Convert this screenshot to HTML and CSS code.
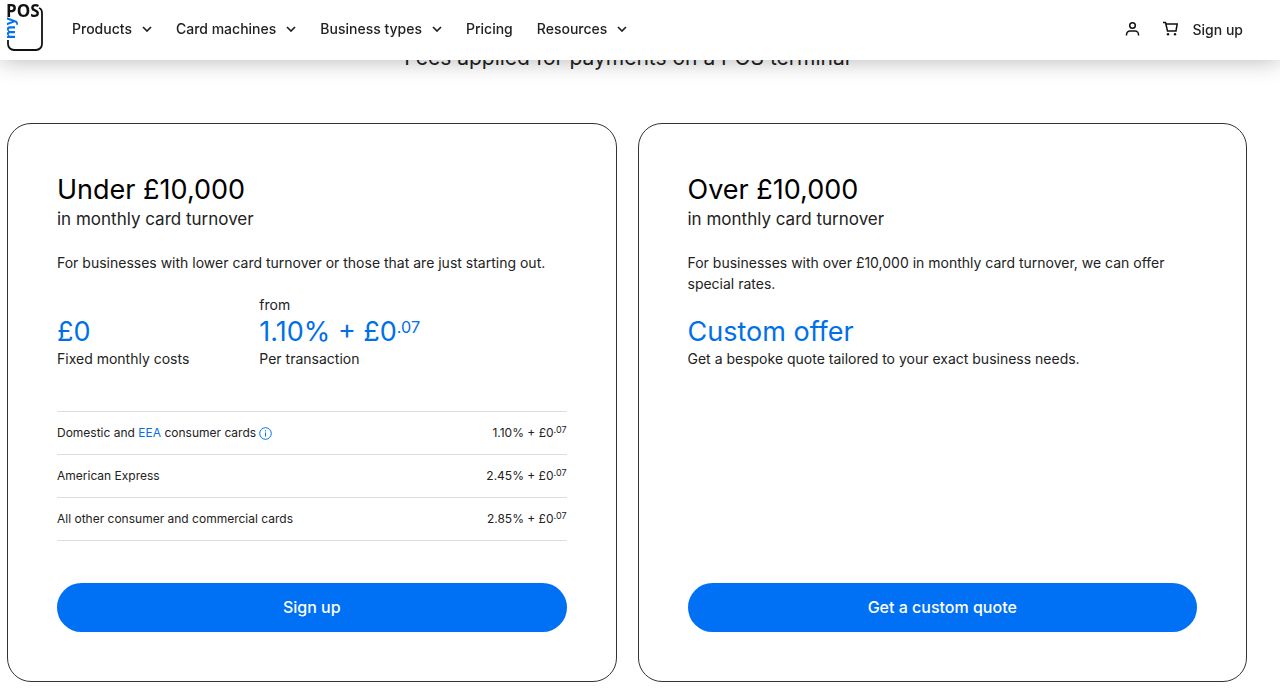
FILE: index.html
```html
<!DOCTYPE html>
<html lang="en">
<head>
<meta charset="utf-8">
<meta name="viewport" content="width=device-width, initial-scale=1">
<title>myPOS pricing</title>
<link rel="stylesheet" href="styles.css">
</head>
<body>
<header class="header">
  <a class="logo" href="#" aria-label="myPOS">
    <svg width="44" height="56" viewBox="0 0 44 56">
      <path d="M8 40v4a6 6 0 0 0 6 6h22a6 6 0 0 0 6-6V13q0-4-3-5" fill="none" stroke="#111" stroke-width="1.800"/>
      <text class="logo-pos" x="6" y="17">POS</text>
      <text class="logo-my" transform="translate(15 39) rotate(-90)">my</text>
    </svg>
  </a>
  <nav class="nav">
    <button class="nav-item" type="button">Products <svg class="chevron" viewBox="0 0 10 6"><path d="M1 1l4 4 4-4"/></svg></button>
    <button class="nav-item" type="button">Card machines <svg class="chevron" viewBox="0 0 10 6"><path d="M1 1l4 4 4-4"/></svg></button>
    <button class="nav-item" type="button">Business types <svg class="chevron" viewBox="0 0 10 6"><path d="M1 1l4 4 4-4"/></svg></button>
    <a class="nav-item" href="#">Pricing</a>
    <button class="nav-item" type="button">Resources <svg class="chevron" viewBox="0 0 10 6"><path d="M1 1l4 4 4-4"/></svg></button>
  </nav>
  <div class="actions">
    <a class="action" href="#" aria-label="Account"><svg class="icon" width="16" height="16" viewBox="0 0 16 16"><circle cx="7.500" cy="4.500" r="2.800"/><path d="M1.500 14.500v-1a3.500 3.500 0 0 1 3.500-3.500h5a3.500 3.500 0 0 1 3.500 3.500v1"/></svg></a>
    <a class="action" href="#" aria-label="Basket"><svg class="icon" width="16" height="16" viewBox="0 0 16 16"><path d="M0 1.500h2.500l2 8.500h8.500l1.200-7H3"/><circle class="wheel" cx="5" cy="13.300" r="1.200"/><circle class="wheel" cx="12" cy="13.300" r="1.200"/></svg></a>
    <a class="sign-up" href="#">Sign up</a>
  </div>
</header>
<main class="main">
  <p class="intro">Fees applied for payments on a POS terminal</p>
  <div class="plans">
    <section class="card">
      <h2 class="title">Under £10,000</h2>
      <p class="subtitle">in monthly card turnover</p>
      <p class="description">For businesses with lower card turnover or those that are just starting out.</p>
      <div class="prices">
        <div class="fixed">
          <p class="price">£0</p>
          <p>Fixed monthly costs</p>
        </div>
        <div>
          <p>from</p>
          <p class="price">1.10% + £0<sup>.07</sup></p>
          <p>Per transaction</p>
        </div>
      </div>
      <table class="rates">
        <tr><th scope="row">Domestic and <a href="#">EEA</a> consumer cards <svg class="info" width="13" height="13" viewBox="0 0 13 13"><circle cx="6.500" cy="6.500" r="5.800"/><path d="M6.500 5.500v4M6.500 3.200v1.200"/></svg></th><td>1.10% + £0<sup>.07</sup></td></tr>
        <tr><th scope="row">American Express</th><td>2.45% + £0<sup>.07</sup></td></tr>
        <tr><th scope="row">All other consumer and commercial cards</th><td>2.85% + £0<sup>.07</sup></td></tr>
      </table>
      <button class="cta" type="button">Sign up</button>
    </section>
    <section class="card">
      <h2 class="title">Over £10,000</h2>
      <p class="subtitle">in monthly card turnover</p>
      <p class="description">For businesses with over £10,000 in monthly card turnover, we can offer special rates.</p>
      <div class="offer">
        <p class="price">Custom offer</p>
        <p>Get a bespoke quote tailored to your exact business needs.</p>
      </div>
      <button class="cta" type="button">Get a custom quote</button>
    </section>
  </div>
</main>
</body>
</html>
```
FILE: styles.css
```css
* { box-sizing: border-box; }
body {
  margin: 0;
  background: #fff;
  color: #222;
  font: 14px/21px Inter, "Liberation Sans", sans-serif;
}
p, h2 { margin: 0; }
a { color: inherit; text-decoration: none; }
button { font: inherit; color: inherit; border: 0; background: none; padding: 0; cursor: pointer; }

.header {
  position: fixed;
  z-index: 1;
  top: 0;
  left: 0;
  right: 0;
  height: 60px;
  padding: 0 37px 4px 0;
  display: flex;
  align-items: center;
  background: #fff;
  box-shadow: 0 0 24px rgba(0, 0, 0, 0.3);
}
.logo { display: flex; margin-right: 28px; }
.logo-pos { font: 700 17px "Open Sans", sans-serif; fill: #111; }
.logo-my { font: 700 14px "Open Sans", sans-serif; fill: #0070f5; }
.nav { display: flex; gap: 24px; flex: 1; }
.nav-item { display: flex; align-items: center; gap: 10px; font-weight: 500; white-space: nowrap; }
.chevron { width: 10px; height: 6px; margin-top: 2px; fill: none; stroke: #222; stroke-width: 1.7; }
.actions { display: flex; align-items: center; gap: 22px; padding-top: 2px; }
.action { display: flex; }
.icon { fill: none; stroke: #111; stroke-width: 1.5; }
.wheel { fill: #111; stroke: none; }
.sign-up { font-weight: 500; margin-left: -8px; }

.main { padding: 42px 33px 17px 7px; }
.intro { text-align: center; font-size: 21px; line-height: 32px; margin-bottom: 49px; }
.plans { display: grid; grid-template-columns: 1fr 1fr; gap: 21px; }
.card {
  display: flex;
  flex-direction: column;
  border: 1px solid #333;
  border-radius: 24px;
  padding: 49px;
}
.title { font-size: 27px; line-height: 34px; font-weight: 400; color: #000; }
.subtitle { font-size: 17px; line-height: 24px; margin-bottom: 21px; }
.description { margin-bottom: 21px; }
.prices { display: flex; align-items: flex-end; gap: 70px; margin-bottom: 42px; }
.price { font-size: 27px; line-height: 33px; font-weight: 400; color: #0070e8; }
sup { font-size: 60%; line-height: 0; vertical-align: baseline; position: relative; top: -0.5em; }
.rates { width: 100%; border-collapse: collapse; margin-bottom: 42px; font-size: 12px; line-height: 18px; }
.rates th, .rates td {
  height: 43px;
  padding: 0;
  border: solid #ddd;
  border-width: 1px 0;
  text-align: left;
  font-weight: 400;
}
.rates td { text-align: right; }
.rates a { color: #0070e8; }
.rates sup { font-size: 75%; }
.info { vertical-align: -3px; fill: none; stroke: #0070f5; }
.cta {
  height: 49px;
  margin-top: auto;
  border-radius: 25px;
  background: #0070f5;
  color: #fff;
  font-size: 16px;
  font-weight: 500;
}
```
